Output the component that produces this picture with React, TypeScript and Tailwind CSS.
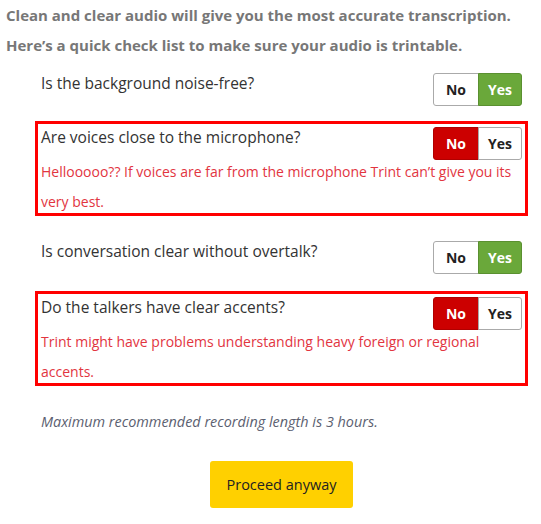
import React from "react";

type Q = { q: string; answer: "yes" | "no"; msg?: string };

const items: Q[] = [
  { q: "Is the background noise-free?", answer: "yes" },
  {
    q: "Are voices close to the microphone?",
    answer: "no",
    msg: "Hellooooo?? If voices are far from the microphone Trint can\u2019t give you its very best.",
  },
  { q: "Is conversation clear without overtalk?", answer: "yes" },
  {
    q: "Do the talkers have clear accents?",
    answer: "no",
    msg: "Trint might have problems understanding heavy foreign or regional accents.",
  },
];

const margins = ["mt-[7px]", "mt-[9px]", "mt-[19px]", "mt-[11px]"];

function Toggle({ answer }: { answer: "yes" | "no" }) {
  return (
    <div className="flex shrink-0 text-[14px] font-bold">
      <div
        className={
          "w-[46px] h-[33px] flex items-center justify-center rounded-l-[3px] border " +
          (answer === "no"
            ? "bg-[#cc0000] border-[#b00000] text-white"
            : "bg-white border-[#aaaaaa] text-[#222]")
        }
      >
        No
      </div>
      <div
        className={
          "w-[44px] h-[33px] -ml-px flex items-center justify-center rounded-r-[3px] border " +
          (answer === "yes"
            ? "bg-[#6aa83a] border-[#5a9030] text-white"
            : "bg-white border-[#aaaaaa] text-[#222]")
        }
      >
        Yes
      </div>
    </div>
  );
}

export default function App() {
  return (
    <div
      className="w-[541px] h-[524px] bg-white overflow-hidden"
      style={{ fontFamily: '"Open Sans", "Noto Sans", sans-serif' }}
    >
      <div className="pl-[6px] text-[15px] font-bold leading-[30px] text-[#777777]">
        <p>Clean and clear audio will give you the most accurate transcription.</p>
        <p>Here’s a quick check list to make sure your audio is trintable.</p>
      </div>
      <div className="ml-[35px] w-[493px]">
        {items.map((it, i) => (
          <div
            key={i}
            className={
              margins[i] +
              " border-[3px] p-[3px] " +
              (it.msg ? "border-[#ff0000]" : "border-transparent")
            }
          >
            <div className="flex justify-between items-start">
              <div className="text-[15.5px] leading-[20px] text-[#333333]">{it.q}</div>
              <Toggle answer={it.answer} />
            </div>
            {it.msg && (
              <div className="-mt-[3px] -mb-[7px] text-[14px] leading-[30px] text-[#e2353f]">
                {it.msg}
              </div>
            )}
          </div>
        ))}
        <p className="mt-[26px] pl-[6px] text-[14.4px] leading-[20px] italic text-[#5b6070]">
          Maximum recommended recording length is 3 hours.
        </p>
        <div className="mt-[29px] flex justify-center">
          <div className="w-[143px] h-[47px] rounded-[3px] bg-[#ffd000] flex items-center justify-center text-[14.5px] text-[#222]">
            Proceed anyway
          </div>
        </div>
      </div>
    </div>
  );
}
